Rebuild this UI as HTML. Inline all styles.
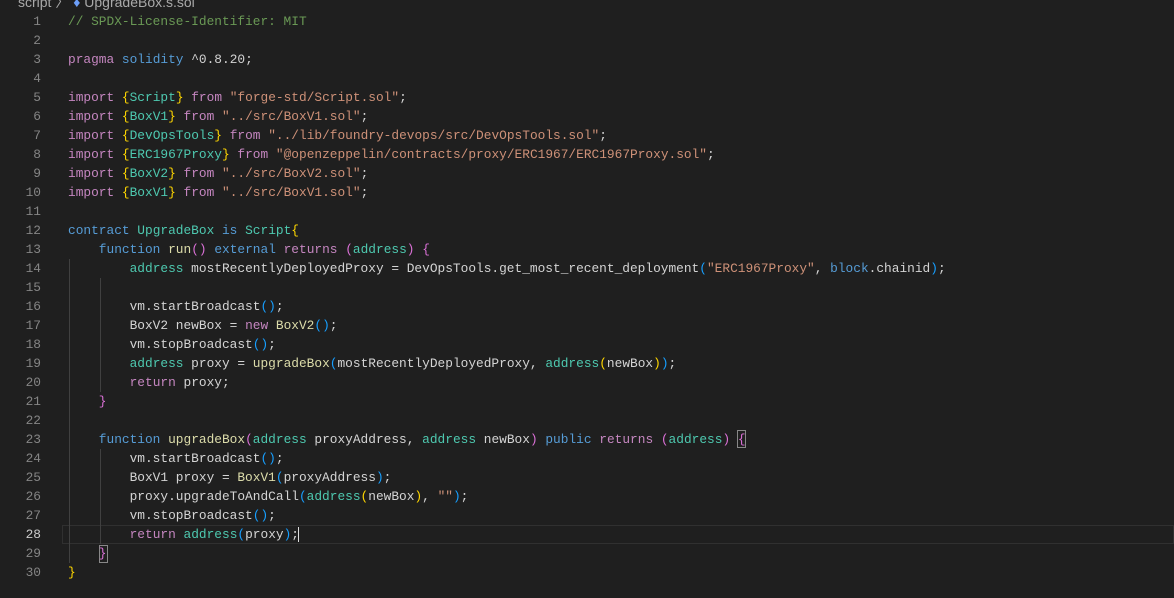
<!DOCTYPE html>
<html><head><meta charset="utf-8"><style>
html,body{margin:0;padding:0;background:#1f1f1f;width:1174px;height:598px;overflow:hidden}
body{position:relative;font-family:"Liberation Mono",monospace;font-size:12.83px;color:#d4d4d4}
.ln{position:absolute;left:0;width:41px;text-align:right;color:#858585;height:19px;line-height:19px}
.ln.cur{color:#cccccc}
.l{position:absolute;left:68px;height:19px;line-height:19px;white-space:pre}
.k{color:#c586c0}.b{color:#569cd6}.t{color:#4ec9b0}.f{color:#dcdcaa}.s{color:#ce9178}.c{color:#6a9955}
.y{color:#ffd700}.p{color:#da70d6}.bl{color:#179fff}
.g{position:absolute;width:1px;background:#404040}
.bc{position:absolute;top:-8px;left:18px;font-family:"Liberation Sans",sans-serif;font-size:14px;color:#a9a9a9;white-space:pre}
</style></head><body>
<div class="bc">script 〉 <span style="color:#6c9ef8">♦</span> UpgradeBox.s.sol</div>
<div style="position:absolute;left:62px;right:0;top:525px;height:17px;border:1px solid #303030"></div>
<div class="g" style="left:69px;top:259px;height:304px"></div>
<div class="g" style="left:100px;top:278px;height:114px"></div>
<div class="g" style="left:100px;top:449px;height:95px"></div>
<div style="position:absolute;left:99px;top:545px;width:7px;height:16px;border:1px solid #888"></div>
<div style="position:absolute;left:737px;top:430px;width:7px;height:16px;border:1px solid #888"></div>
<div style="position:absolute;left:298px;top:527px;width:1px;height:15px;background:#ddd"></div>

<div class="ln" style="top:12px">1</div><div class="l" style="top:12px"><span class="c">// SPDX-License-Identifier: MIT</span></div>
<div class="ln" style="top:31px">2</div>
<div class="ln" style="top:50px">3</div><div class="l" style="top:50px"><span class="k">pragma</span> <span class="b">solidity</span> ^0.8.20;</div>
<div class="ln" style="top:69px">4</div>
<div class="ln" style="top:88px">5</div><div class="l" style="top:88px"><span class="k">import</span> <span class="y">{</span><span class="t">Script</span><span class="y">}</span> <span class="k">from</span> <span class="s">"forge-std/Script.sol"</span>;</div>
<div class="ln" style="top:107px">6</div><div class="l" style="top:107px"><span class="k">import</span> <span class="y">{</span><span class="t">BoxV1</span><span class="y">}</span> <span class="k">from</span> <span class="s">"../src/BoxV1.sol"</span>;</div>
<div class="ln" style="top:126px">7</div><div class="l" style="top:126px"><span class="k">import</span> <span class="y">{</span><span class="t">DevOpsTools</span><span class="y">}</span> <span class="k">from</span> <span class="s">"../lib/foundry-devops/src/DevOpsTools.sol"</span>;</div>
<div class="ln" style="top:145px">8</div><div class="l" style="top:145px"><span class="k">import</span> <span class="y">{</span><span class="t">ERC1967Proxy</span><span class="y">}</span> <span class="k">from</span> <span class="s">"@openzeppelin/contracts/proxy/ERC1967/ERC1967Proxy.sol"</span>;</div>
<div class="ln" style="top:164px">9</div><div class="l" style="top:164px"><span class="k">import</span> <span class="y">{</span><span class="t">BoxV2</span><span class="y">}</span> <span class="k">from</span> <span class="s">"../src/BoxV2.sol"</span>;</div>
<div class="ln" style="top:183px">10</div><div class="l" style="top:183px"><span class="k">import</span> <span class="y">{</span><span class="t">BoxV1</span><span class="y">}</span> <span class="k">from</span> <span class="s">"../src/BoxV1.sol"</span>;</div>
<div class="ln" style="top:202px">11</div>
<div class="ln" style="top:221px">12</div><div class="l" style="top:221px"><span class="b">contract</span> <span class="t">UpgradeBox</span> <span class="b">is</span> <span class="t">Script</span><span class="y">{</span></div>
<div class="ln" style="top:240px">13</div><div class="l" style="top:240px">    <span class="b">function</span> <span class="f">run</span><span class="p">()</span> <span class="b">external</span> <span class="k">returns</span> <span class="p">(</span><span class="t">address</span><span class="p">)</span> <span class="p">{</span></div>
<div class="ln" style="top:259px">14</div><div class="l" style="top:259px">        <span class="t">address</span> mostRecentlyDeployedProxy = DevOpsTools.get_most_recent_deployment<span class="bl">(</span><span class="s">"ERC1967Proxy"</span>, <span class="b">block</span>.chainid<span class="bl">)</span>;</div>
<div class="ln" style="top:278px">15</div>
<div class="ln" style="top:297px">16</div><div class="l" style="top:297px">        vm.startBroadcast<span class="bl">()</span>;</div>
<div class="ln" style="top:316px">17</div><div class="l" style="top:316px">        BoxV2 newBox = <span class="k">new</span> <span class="f">BoxV2</span><span class="bl">()</span>;</div>
<div class="ln" style="top:335px">18</div><div class="l" style="top:335px">        vm.stopBroadcast<span class="bl">()</span>;</div>
<div class="ln" style="top:354px">19</div><div class="l" style="top:354px">        <span class="t">address</span> proxy = <span class="f">upgradeBox</span><span class="bl">(</span>mostRecentlyDeployedProxy, <span class="t">address</span><span class="y">(</span>newBox<span class="y">)</span><span class="bl">)</span>;</div>
<div class="ln" style="top:373px">20</div><div class="l" style="top:373px">        <span class="k">return</span> proxy;</div>
<div class="ln" style="top:392px">21</div><div class="l" style="top:392px">    <span class="p">}</span></div>
<div class="ln" style="top:411px">22</div>
<div class="ln" style="top:430px">23</div><div class="l" style="top:430px">    <span class="b">function</span> <span class="f">upgradeBox</span><span class="p">(</span><span class="t">address</span> proxyAddress, <span class="t">address</span> newBox<span class="p">)</span> <span class="b">public</span> <span class="k">returns</span> <span class="p">(</span><span class="t">address</span><span class="p">)</span> <span class="p">{</span></div>
<div class="ln" style="top:449px">24</div><div class="l" style="top:449px">        vm.startBroadcast<span class="bl">()</span>;</div>
<div class="ln" style="top:468px">25</div><div class="l" style="top:468px">        BoxV1 proxy = <span class="f">BoxV1</span><span class="bl">(</span>proxyAddress<span class="bl">)</span>;</div>
<div class="ln" style="top:487px">26</div><div class="l" style="top:487px">        proxy.upgradeToAndCall<span class="bl">(</span><span class="t">address</span><span class="y">(</span>newBox<span class="y">)</span>, <span class="s">""</span><span class="bl">)</span>;</div>
<div class="ln" style="top:506px">27</div><div class="l" style="top:506px">        vm.stopBroadcast<span class="bl">()</span>;</div>
<div class="ln cur" style="top:525px">28</div><div class="l" style="top:525px">        <span class="k">return</span> <span class="t">address</span><span class="bl">(</span>proxy<span class="bl">)</span>;</div>
<div class="ln" style="top:544px">29</div><div class="l" style="top:544px">    <span class="p">}</span></div>
<div class="ln" style="top:563px">30</div><div class="l" style="top:563px"><span class="y">}</span></div>
</body></html>
